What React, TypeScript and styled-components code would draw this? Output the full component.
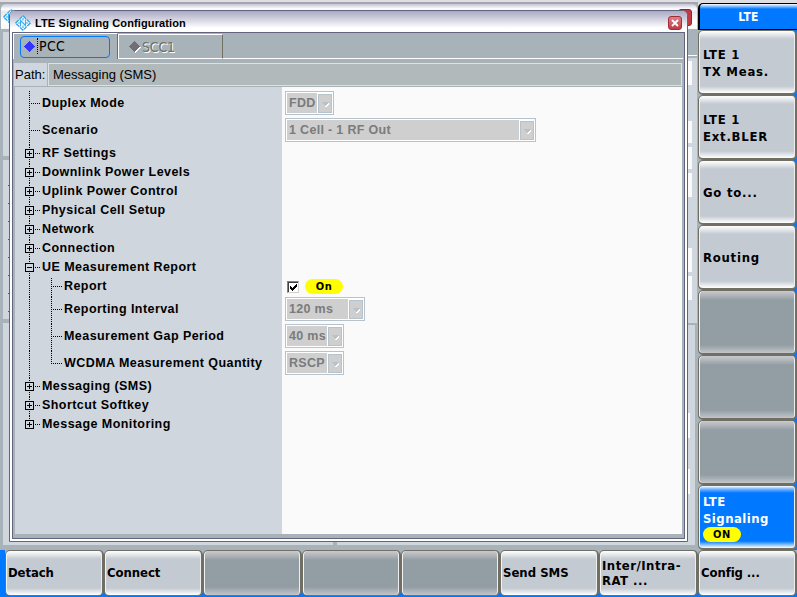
import React from 'react';
import styled, { createGlobalStyle, css } from 'styled-components';

const GlobalStyle = createGlobalStyle`
  * { box-sizing: border-box; }
  html, body { margin: 0; padding: 0; overflow: hidden; }
  body { font-family: "Liberation Sans", Arial, sans-serif; font-size: 13px; color: #000; }
`;

const Screen = styled.div`
  position: relative;
  display: grid;
  grid-template-columns: 698px 99px;
  grid-template-rows: 550px 47px;
  width: 797px;
  height: 597px;
  overflow: hidden;
  background: #0078ff;
`;

/* ---------- window behind the dialog ---------- */

const Desktop = styled.div`
  display: flex;
  flex-direction: column;
  background: #a7b3b8;
`;

const TopStrip = styled.div`
  height: 4px;
  flex: none;
  background: #dfdfe3;
  border-bottom: 2px solid #a5a5ab;
`;

const BackTitle = styled.div`
  display: flex;
  justify-content: space-between;
  height: 25px;
  flex: none;
  margin: 0 1px;
  padding: 5px 5px 0 2px;
  border-radius: 5px 5px 0 0;
  background: linear-gradient(#c5c5d6, #fff 5px, #e6e6ef 8px, #fff 18px, #f4f6f8);
`;

const BackClose = styled.div`
  width: 14px;
  height: 17px;
  border-radius: 3px;
  background: #c23a44;
  border: 1px solid #8f2430;
`;

const BackBody = styled.div`
  display: flex;
  justify-content: space-between;
  flex: 1;
  padding: 3px 0 5px 3px;
  min-height: 0;
`;

const BackLeft = styled.div`
  display: flex;
  flex-direction: column;
  gap: 4px;
  width: 330px;
`;

const LeftPane = styled.div<{ $h?: number }>`
  ${p => (p.$h ? css`height: ${p.$h}px;` : css`flex: 1;`)}
  background: #cfd6dd;
`;

const TickColumn = styled.div`
  display: flex;
  flex-direction: column;
  gap: 17px;
  padding: 25px 0 0 5px;
`;

const Tick = styled.i`
  width: 1px;
  height: 1px;
  background: #555a6a;
`;

const BackRight = styled.div`
  display: flex;
  flex-direction: column;
  flex: 1;
  margin: -3px 0 0 4px;
`;

const RightTabs = styled.div`
  height: 27px;
  margin-right: 1px;
  background: #a7b3b8;
  border-bottom: 1px solid #fff;
`;

const RightPane = styled.div<{ $h?: number; $top: number; $inset: number }>`
  display: flex;
  flex-direction: column;
  ${p => (p.$h ? css`height: ${p.$h}px;` : css`flex: 1;`)}
  margin-top: 2px;
  padding-top: ${p => p.$top}px;
  margin-right: ${p => p.$inset}px;
  background: #cfd6dd;
`;

const Field = styled.div<{ $gap: number; $h: number }>`
  flex: none;
  height: ${p => p.$h}px;
  margin: ${p => p.$gap}px 5px 0 0;
  background: #fafafa;
`;

/* ---------- softkeys ---------- */

const SideKeys = styled.div`
  display: flex;
  flex-direction: column;
  background: linear-gradient(90deg, #a7b3b8 6px, #0078ff 6px);
`;

const SideHeader = styled.div`
  height: 30px;
  flex: none;
  padding: 3px 0 0 0;
  background: #dfdfe3;
`;

const HeaderKey = styled.div`
  display: flex;
  align-items: center;
  justify-content: center;
  height: 27px;
  border: 1px solid #000;
  border-right: 0;
  border-left-width: 2px;
  border-radius: 5px 0 0 0;
  padding-top: 1px;
  background: linear-gradient(#fff, #0078ff 5px);
  color: #fff;
  font: bold 12px/16px "DejaVu Sans Condensed", "DejaVu Sans", sans-serif;
  letter-spacing: 0.3px;
`;

const BottomKeys = styled.div`
  grid-column: 1 / 3;
  display: flex;
  padding: 0 0 1px 5px;
  background: linear-gradient(90deg, #0078ff 5px, transparent 5px),
    linear-gradient(#a7b3b8 7px, #0078ff 7px);
`;

type KeyKind = 'plain' | 'empty' | 'active';

const keyFill = {
  plain: 'linear-gradient(#fff, #e3e6ea 4px, #c4cad1 8px, #c4cad1 calc(100% - 7px), #fff)',
  empty: 'linear-gradient(#c8c9cd, #adb3b7 5px, #929ea4 9px, #929ea4 calc(100% - 8px), #c3c5c9)',
  active: 'linear-gradient(#fff, #79b7ff 3px, #0078ff 7px, #0078ff calc(100% - 7px), #fff)',
};

const Softkey = styled.div<{ $kind: KeyKind; $side?: boolean; $spacing?: number }>`
  display: flex;
  flex-direction: column;
  justify-content: center;
  align-items: flex-start;
  flex: none;
  width: 99px;
  height: ${p => (p.$side ? 65 : 46)}px;
  padding: 0 0 ${p => (p.$side ? 0 : 1)}px ${p => (p.$side ? 4 : 2)}px;
  border: 1px solid #716f64;
  border-right-width: 2px;
  ${p => p.$side && css`border-bottom-width: 2px; padding-top: 1px;`}
  border-radius: 5px;
  background: ${p => keyFill[p.$kind]};
  box-shadow: inset 1px 0 #f1f3f5, inset -1px 0 #eceff1;
  color: ${p => (p.$kind === 'active' ? '#fff' : '#000')};
  font: bold 13px/${p => (p.$side ? 17 : 15)}px "DejaVu Sans Condensed", "DejaVu Sans", sans-serif;
  letter-spacing: ${p => p.$spacing ?? 0}px;
  white-space: pre;
`;

const Pill = styled.span<{ $w: number }>`
  display: flex;
  align-items: center;
  justify-content: center;
  width: ${p => p.$w}px;
  height: 15px;
  border-radius: 8px;
  background: #ff0;
  color: #000;
  font: bold 11px/15px "DejaVu Sans Condensed", "DejaVu Sans", sans-serif;
  letter-spacing: 0.6px;
`;

/* ---------- dialog ---------- */

const Dialog = styled.section`
  position: absolute;
  left: 9px;
  top: 10px;
  width: 679px;
  height: 532px;
  display: flex;
  flex-direction: column;
  border: 1px solid #63637f;
  border-radius: 6px 6px 0 0;
  background: #fff;
  padding: 0 2px 2px;
  overflow: hidden;
`;

const TitleBar = styled.header`
  display: flex;
  align-items: center;
  flex: none;
  height: 21px;
  margin: 0 -2px;
  padding: 2px 5px 0 5px;
  background: linear-gradient(#a9a9c3, #c2c2d5 5px, #e0e0ea 11px, #fff 17px);
  font: bold 11px/14px "Liberation Sans", Arial, sans-serif;
  & > span { flex: 1; margin-left: 4px; letter-spacing: 0.12px; }
`;

const CloseButton = styled.button`
  display: flex;
  align-items: center;
  justify-content: center;
  width: 14px;
  height: 14px;
  padding: 0;
  border: 1px solid #a02c3a;
  border-radius: 3px;
  background: linear-gradient(#dc8088, #c23a44);
`;

const Frame = styled.div`
  display: flex;
  flex-direction: column;
  flex: 1;
  min-height: 0;
  border: 1px solid #63637f;
  background: #a7b3b8;
`;

const Tabs = styled.div`
  display: flex;
  flex: none;
  height: 26px;
`;

const Tab = styled.div<{ $active?: boolean }>`
  display: flex;
  align-items: center;
  width: 105px;
  font: 14px/16px "DejaVu Sans Condensed", "DejaVu Sans", sans-serif;
  ${p =>
    p.$active
      ? css`
          padding: 1px 0 0 6px;
          border-top: 1px solid #fff;
          border-left: 1px solid #fff;
          border-right: 1px solid #716f64;
        `
      : css`
          margin-top: 1px;
          padding: 0 0 0 10px;
          border: 1px solid #fff;
          border-right-color: #716f64;
          color: #716f64;
          text-shadow: 1px 1px #fff;
          letter-spacing: -0.2px;
        `}
`;

const TabFocus = styled.div`
  display: flex;
  align-items: center;
  width: 90px;
  height: 22px;
  padding-left: 3px;
  border: 1px solid #0078ff;
  border-radius: 4px;
`;

const TabLabel = styled.span<{ $dotted?: boolean }>`
  margin-left: 1px;
  ${p => p.$dotted && css`border-left: 1px dotted #000; padding-left: 1px; margin-top: -2px; letter-spacing: 0.3px;`}
`;

const TabRest = styled.div`
  flex: 1;
  margin-right: 1px;
  border-bottom: 1px solid #fff;
`;

const PathRow = styled.div`
  display: flex;
  flex: none;
  height: 23px;
  margin: 4px 2px 1px 1px;
  font: 13px/23px "Liberation Sans", Arial, sans-serif;
`;

const PathLabel = styled.label`
  width: 33px;
  background: #cfd6dd;
  padding-left: 1px;
`;

const PathValue = styled.div`
  flex: 1;
  margin-left: 1px;
  padding-left: 4px;
  border: 1px solid #dbe2e4;
  background: #b1b9bb;
  line-height: 21px;
`;

const Content = styled.div`
  flex: 1;
  min-height: 0;
  margin: 0 2px 4px 2px;
  padding-top: 4px;
  background: linear-gradient(90deg, #cfd6dd 267px, #fafafa 267px);
`;

const Row = styled.div<{ $h: number }>`
  display: grid;
  grid-template-columns: 270px 1fr;
  height: ${p => p.$h}px;
`;

const NameCell = styled.div<{ $h: number }>`
  display: flex;
  height: ${p => p.$h}px;
  line-height: ${p => p.$h - 2}px;
  font-size: 12.5px;
  font-weight: bold;
  letter-spacing: 0.44px;
  white-space: pre;
  & > svg { flex: none; }
`;

const ValueCell = styled.div<{ $top: number }>`
  display: flex;
  padding-top: ${p => p.$top}px;
`;

const Combo = styled.div<{ $w: number }>`
  display: flex;
  width: ${p => p.$w}px;
  height: 24px;
  padding: 1px;
  border: 1px solid #b7c3cc;
  background: #fff;
  color: #7b7b7b;
  font: bold 12.5px/20px "Liberation Sans", Arial, sans-serif;
  letter-spacing: 0.32px;
  white-space: pre;
`;

const ComboText = styled.span`
  flex: 1;
  padding-left: 2px;
  background: #cfcfcf;
  overflow: hidden;
`;

const ComboArrow = styled.span`
  display: flex;
  flex: none;
  width: 14px;
  height: 19px;
  margin: 1px 0 0 1px;
  border: 1px solid #b7c3cc;
  background: #cfcfcf;
`;

const CheckBox = styled.span`
  width: 12px;
  height: 12px;
  margin: 2px 6px 0 2px;
  border: 1px solid #808080;
  border-right-color: #d4d0c8;
  border-bottom-color: #d4d0c8;
  box-shadow: inset 1px 1px #404040;
  background: #fff;
  & > svg { display: block; }
`;

const Nub = styled.i`
  position: absolute;
  left: 333px;
  top: 542px;
  width: 4px;
  height: 3px;
  background: #a7b3b8;
`;

/* ---------- drawings ---------- */

const Logo = () => (
  <svg width="16" height="16" viewBox="0 0 16 16">
    <path d="M8 0.700 15.300 8 8 15.300 0.700 8Z" fill="#f4fbff" stroke="#2ba3ee" strokeWidth="1.300" strokeDasharray="4.200 0.960" />
    <path d="M5.500 4.500v7M10.500 4.500v7M5.500 5.500 10.500 10.500M8 3v2.500M8 10.500V13M3 8h2M11 8h2" stroke="#38adf0" strokeWidth="1.100" fill="none" />
  </svg>
);

const Diamond = ({ color, raised }: { color: string; raised?: boolean }) => (
  <svg width="12" height="12" viewBox="0 0 12 12" shapeRendering="crispEdges">
    {raised && <path d="M6.500 1.500 12 7 6.500 12 1 7Z" fill="#fff" />}
    <path d="M5.500 0 11 5.500 5.500 11 0 5.500Z" fill={color} />
  </svg>
);

type Mark = 'leaf' | 'plus' | 'minus';

const Guide = ({ h, mark, last }: { h: number; mark: Mark; last?: boolean }) => {
  const c = Math.floor(h / 2);
  return (
    <svg width="27" height={h} shapeRendering="crispEdges" stroke="#000" fill="none">
      <path d={`M14.5 0V${last ? c : h}`} strokeDasharray="1 1" />
      <path d={`M${mark === 'leaf' ? 16 : 20} ${c - 0.5}H26`} strokeDasharray="1 1" />
      {mark !== 'leaf' && <rect x="10.500" y={c - 4.5} width="8" height="8" fill="#cfd6dd" />}
      {mark !== 'leaf' && <path d={`M12 ${c - 0.5}h5`} />}
      {mark === 'plus' && <path d={`M14.500 ${c - 3}v5`} />}
    </svg>
  );
};

const SubGuide = ({ h, last }: { h: number; last?: boolean }) => {
  const c = Math.floor(h / 2);
  return (
    <svg width="49" height={h} shapeRendering="crispEdges" stroke="#000" fill="none">
      <path d={`M14.5 0V${h}`} strokeDasharray="1 1" />
      <path d={`M36.500 0V${last ? c : h}`} strokeDasharray="1 1" />
      <path d={`M38 ${c - 0.5}H48`} strokeDasharray="1 1" />
    </svg>
  );
};

const Arrow = () => (
  <svg width="12" height="17" shapeRendering="crispEdges">
    <path d="M3 7h7L6.500 11Z" fill="#b7c3cc" />
    <path d="M9 8v1h-1v1h-1v1h-1v1h2v-1h1v-1h1V8Z" fill="#fff" />
  </svg>
);

/* ---------- data ---------- */

interface Item {
  name: string;
  mark?: Mark;
  sub?: boolean;
  last?: boolean;
  combo?: [string, number];
  check?: boolean;
}

const items: Item[] = [
  { name: 'Duplex Mode', combo: ['FDD', 49] },
  { name: 'Scenario', combo: ['1 Cell - 1 RF Out', 251] },
  { name: 'RF Settings', mark: 'plus' },
  { name: 'Downlink Power Levels', mark: 'plus' },
  { name: 'Uplink Power Control', mark: 'plus' },
  { name: 'Physical Cell Setup', mark: 'plus' },
  { name: 'Network', mark: 'plus' },
  { name: 'Connection', mark: 'plus' },
  { name: 'UE Measurement Report', mark: 'minus' },
  { name: 'Report', sub: true, check: true },
  { name: 'Reporting Interval', sub: true, combo: ['120 ms', 80] },
  { name: 'Measurement Gap Period', sub: true, combo: ['40 ms', 59] },
  { name: 'WCDMA Measurement Quantity', sub: true, last: true, combo: ['RSCP', 59] },
  { name: 'Messaging (SMS)', mark: 'plus' },
  { name: 'Shortcut Softkey', mark: 'plus' },
  { name: 'Message Monitoring', mark: 'plus', last: true },
];

const sideKeys: { text: string; kind: KeyKind; on?: boolean }[] = [
  { text: 'LTE 1\nTX Meas.', kind: 'plain' },
  { text: 'LTE 1\nExt.BLER', kind: 'plain' },
  { text: 'Go to...', kind: 'plain' },
  { text: 'Routing', kind: 'plain' },
  { text: '', kind: 'empty' },
  { text: '', kind: 'empty' },
  { text: '', kind: 'empty' },
  { text: 'LTE\nSignaling', kind: 'active', on: true },
];

const bottomKeys: { text: string; spacing?: number }[] = [
  { text: 'Detach', spacing: -0.1 },
  { text: 'Connect', spacing: -0.05 },
  { text: '' },
  { text: '' },
  { text: '' },
  { text: 'Send SMS' },
  { text: 'Inter/Intra-\nRAT ...', spacing: 0.5 },
  { text: 'Config ...', spacing: -0.1 },
];

const TreeRow = ({ item }: { item: Item }) => {
  const h = item.combo ? 27 : 19;
  return (
    <Row $h={h}>
      <NameCell $h={h}>
        {item.sub ? <SubGuide h={h} last={item.last} /> : <Guide h={h} mark={item.mark ?? 'leaf'} last={item.last} />}
        {item.name}
      </NameCell>
      <ValueCell $top={item.check ? 1 : 0}>
        {item.combo && (
          <Combo $w={item.combo[1]}>
            <ComboText>{item.combo[0]}</ComboText>
            <ComboArrow><Arrow /></ComboArrow>
          </Combo>
        )}
        {item.check && (
          <>
            <CheckBox>
              <svg width="10" height="10" shapeRendering="crispEdges">
                <path d="M2 4v3l2 2 5-5V1L4 6Z" fill="#000" />
              </svg>
            </CheckBox>
            <Pill $w={38}>On</Pill>
          </>
        )}
      </ValueCell>
    </Row>
  );
};

export default function App() {
  return (
    <>
      <GlobalStyle />
      <Screen>
        <Desktop>
          <TopStrip />
          <BackTitle>
            <Logo />
            <BackClose />
          </BackTitle>
          <BackBody>
            <BackLeft>
              <LeftPane $h={124} />
              <LeftPane $h={159}>
                <TickColumn>
                  {Array.from({ length: 8 }, (_, i) => <Tick key={i} />)}
                </TickColumn>
              </LeftPane>
              <LeftPane />
            </BackLeft>
            <BackRight>
              <RightTabs />
              <RightPane $h={265} $top={3} $inset={1}>
                <Field $gap={0} $h={24} />
                <Field $gap={36} $h={22} />
                <Field $gap={4} $h={22} />
                <Field $gap={4} $h={24} />
                <Field $gap={51} $h={24} />
                <Field $gap={4} $h={24} />
              </RightPane>
              <RightPane $top={88} $inset={3}>
                <Field $gap={0} $h={25} />
                <Field $gap={31} $h={25} />
              </RightPane>
            </BackRight>
          </BackBody>
        </Desktop>

        <SideKeys>
          <SideHeader>
            <HeaderKey>LTE</HeaderKey>
          </SideHeader>
          {sideKeys.map((k, i) => (
            <Softkey key={i} $kind={k.kind} $side $spacing={k.on ? 0.45 : 0.75}>
              {k.text}
              {k.on && <Pill $w={38}>ON</Pill>}
            </Softkey>
          ))}
        </SideKeys>

        <BottomKeys>
          {bottomKeys.map((k, i) => (
            <Softkey key={i} $kind={k.text ? 'plain' : 'empty'} $spacing={k.spacing}>{k.text}</Softkey>
          ))}
        </BottomKeys>

        <Dialog>
          <TitleBar>
            <Logo />
            <span>LTE Signaling Configuration</span>
            <CloseButton aria-label="Close">
              <svg width="10" height="10" viewBox="0 0 10 10">
                <path d="M2 2l6 6M8 2l-6 6" stroke="#fff" strokeWidth="1.8" />
              </svg>
            </CloseButton>
          </TitleBar>
          <Frame>
            <Tabs>
              <Tab $active>
                <TabFocus>
                  <Diamond color="#3333ff" />
                  <TabLabel $dotted>PCC</TabLabel>
                </TabFocus>
              </Tab>
              <Tab>
                <Diamond color="#716f75" raised />
                <TabLabel>SCC1</TabLabel>
              </Tab>
              <TabRest />
            </Tabs>
            <PathRow>
              <PathLabel>Path:</PathLabel>
              <PathValue>Messaging (SMS)</PathValue>
            </PathRow>
            <Content>
              {items.map(item => <TreeRow key={item.name} item={item} />)}
            </Content>
          </Frame>
        </Dialog>
        <Nub />
      </Screen>
    </>
  );
}
